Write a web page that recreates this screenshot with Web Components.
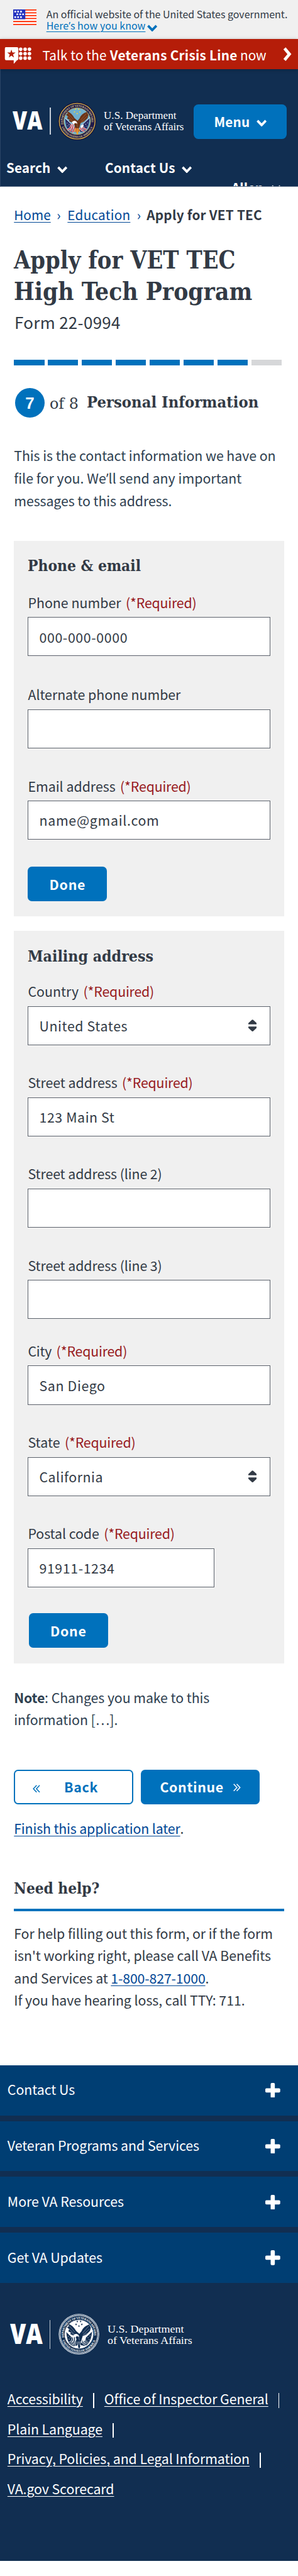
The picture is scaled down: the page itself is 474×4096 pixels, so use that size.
<!DOCTYPE html>
<html lang="en">
<head>
<meta charset="utf-8">
<title>Apply for VET TEC</title>
<style>
html{background:#fff;overflow:hidden}
body{margin:0;width:640px;height:5529px;overflow:hidden;zoom:.740625;font-family:"Noto Sans CJK SC","Open Sans",sans-serif;font-size:28.8px;line-height:48px;color:#323a45;background:#fff}
</style>
</head>
<body>
<vet-app></vet-app>
<script>
const fitted = [];
const define = (name, html) => customElements.define(name, class extends HTMLElement {
  constructor() {
    super();
    this.attachShadow({ mode: 'open' }).innerHTML = '<style>*{box-sizing:border-box}</style>' +
      (typeof html === 'function' ? html(this) : html);
  }
});

/* A single run of text set to a measured width (w); "squeeze" scales the glyphs, otherwise tracking is adjusted. */
customElements.define('text-run', class extends HTMLElement {
  constructor() {
    super();
    this.attachShadow({ mode: 'open' }).innerHTML = `<style>
      :host{display:block;flex:none;white-space:nowrap}
      :host([bold]){font-weight:700}
      :host([link]){color:var(--link,#004795)}
      span{display:inline-block;transform-origin:0 50%}
      :host([link]) span{text-decoration:underline;text-decoration-thickness:2px;text-underline-offset:4px}
      ::slotted(q){quotes:none;font-family:"Open Sans",sans-serif;line-height:1px}
    </style><span><slot></slot></span>`;
  }
  connectedCallback() { fitted.push(this); }
  fit(k) {
    const w = +this.getAttribute('w');
    if (!w) return;
    this.style.width = w + 'px';
    const s = this.shadowRoot.querySelector('span');
    const natural = s.getBoundingClientRect().width / k;
    if (this.hasAttribute('squeeze')) s.style.transform = `scaleX(${w / natural})`;
    else s.style.letterSpacing = (w - natural) / this.textContent.length + 'px';
  }
});

define('chevron-icon', `<style>:host{display:block;flex:none}svg{display:block}</style>
<svg width="22" height="15" viewBox="0 0 22 15"><path d="M2 2.5 11 12 20 2.5" fill="none" stroke="currentColor" stroke-width="5"/></svg>`);

const star = (x, y, r) => {
  let p = '';
  for (let i = 0; i < 10; i++) {
    const a = -Math.PI / 2 + i * Math.PI / 5, q = i % 2 ? r * .4 : r;
    p += `${(x + q * Math.cos(a)).toFixed(2)},${(y + q * Math.sin(a)).toFixed(2)} `;
  }
  return `<polygon points="${p}"/>`;
};

define('va-seal', el => {
  const mono = el.hasAttribute('mono');
  const id = mono ? 'm' : 'c';
  const c = mono
    ? { rim: '#dfe5ec', ring: '#112e51', sky: '#fff', txt: '#fff', star: '#112e51', wing: '#112e51', feather: '#8090a5', head: '#fff', flag: '#112e51', red: '#112e51', tail: '#112e51' }
    : { rim: '#d8b145', ring: '#1f1a4b', sky: '#70b0cf', txt: '#d9c48a', star: '#f0d23c', wing: '#6b3317', feather: '#a0623a', head: '#fff', flag: '#272c66', red: '#c0202f', tail: '#e9a52c' };
  return `<style>:host{display:block;flex:none}svg{display:block;width:100%;height:100%}</style>
<svg viewBox="-50 -50 100 100">
<defs><path id="t${id}" d="M-36.3 8A37.2 37.2 0 1 1 36.3 8"/><path id="b${id}" d="M-41 13A43 43 0 0 0 41 13"/></defs>
<circle r="49.5" fill="${mono ? '#dfe5ec' : '#17163f'}"/>
<circle r="${mono ? 48.3 : 46.5}" fill="${mono ? '#112e51' : 'none'}"/>
<circle r="46.2" fill="${c.ring}" stroke="${c.rim}" stroke-width="${mono ? 3.6 : 2.2}" ${mono ? 'stroke-dasharray="1.9 1"' : ''}/>
<circle r="34.6" fill="${c.sky}" stroke="${c.rim}" stroke-width="1.2"/>
<g fill="${c.txt}" font-family="Liberation Serif,serif" font-weight="700" font-size="7.4">
<text><textPath href="#t${id}" textLength="128">DEPARTMENT OF VETERANS AFFAIRS</textPath></text>
<text><textPath href="#b${id}" textLength="104" startOffset="2">UNITED STATES OF AMERICA</textPath></text></g>
<g fill="${c.star}">${star(-4, -31, 2.8)}${star(4, -31, 2.8)}${star(-7, -24, 2.8)}${star(7, -24, 2.8)}${star(0, -20, 2.8)}</g>
<path d="M-31-7-8 14-4 25Q-10 31-19 27-30 18-31-7ZM32-8 9 12 5 25Q12 31 20 26 31 15 32-8Z" fill="${c.flag}"/>
<path d="M-31-8-8 14M33-10 9 13" stroke="#fff" stroke-width="${mono ? 4 : 1.4}"/>
<g fill="#fff"><circle cx="-26" cy="5" r=".9"/><circle cx="-21" cy="8" r=".9"/><circle cx="-24" cy="12" r=".9"/><circle cx="-18" cy="13" r=".9"/><circle cx="27" cy="4" r=".9"/><circle cx="22" cy="8" r=".9"/><circle cx="25" cy="13" r=".9"/><circle cx="19" cy="15" r=".9"/></g>
<path d="M-16 8Q-13 17-25 22M-11 7Q-9 18-19 26M-6 14Q-7 23-13 29M12 14Q15 21 24 21M8 17Q10 24 19 26" fill="none" stroke="#fff" stroke-width="4.4"/>
<path d="M-16 8Q-13 17-25 22M-11 7Q-9 18-19 26M-6 14Q-7 23-13 29M12 14Q15 21 24 21M8 17Q10 24 19 26" fill="none" stroke="${c.red}" stroke-width="2.1"/>
<path d="M-25-25Q-14-21-7-8L1-1 6-7Q10-19 25-24L29-16 27-8 18 1 9 5 5 18-5 19-7 9-14 3-21 0-20-4-26-7-24-12-29-17-25-19Z" fill="${c.wing}"/>
<path d="M-24-21-10-5M-25-14-11 0M-20-5-9 4M24-20 9-3M26-13 10 1M20-3 8 5M-1 4 1 15" stroke="${c.feather}" stroke-width="1.3" fill="none"/>
<path d="M-14 3Q-9-4-2 1L1 6-6 5-9 9Z" fill="${c.head}"/>
<path d="M9 12 17 8 16 15 9 18Z" fill="${c.head}"/>
<path d="M-5 18-8 29-3 26-1 34 2 34 4 26 8 28 4 18Z" fill="${c.tail}"/><path d="M-2 18-3 29M2 18 3 28" stroke="${mono ? '#fff' : '#c0202f'}" stroke-width="1.3"/>
</svg>`;
});

define('va-logo', el => {
  const f = el.hasAttribute('footer');
  return `<style>
:host{display:flex;align-items:center;color:#fff}
.va{font:800 ${f ? 60 : 56}px/60px "Open Sans",sans-serif;margin:-5px 16px 0 ${f ? 21 : 27}px}
.bar{width:1.4px;height:${f ? 62 : 59}px;background:#c5ced8;margin-right:${f ? 17.5 : 16}px}
va-seal{width:${f ? 88 : 83}px;height:${f ? 88 : 83}px;margin-right:${f ? 17 : 15.5}px}
.dept{font:${f ? 23.5 : 22.4}px/${f ? 24.5 : 23.5}px "Liberation Serif",serif}
</style>
<text-run squeeze class="va" w="${f ? 70 : 64}">VA</text-run><div class="bar"></div><va-seal ${f ? 'mono' : ''}></va-seal>
<div class="dept"><text-run squeeze w="${f ? 164 : 156}">U.S. Department</text-run><text-run squeeze w="${f ? 182 : 172}">of Veterans Affairs</text-run></div>`;
});

define('gov-banner', `<style>
:host{display:flex;height:84px;background:#f0f0f0;padding:20px 0 0 29px;box-sizing:border-box;font-size:21.6px;line-height:23.5px;--link:#0071bc}
svg{display:block;margin-right:20.5px}.row{display:flex}chevron-icon{color:#0071bc;margin:9px 0 0 4px}
</style>
<svg width="50" height="34" viewBox="0 0 50 34"><path fill="#fff" d="M0 0h50v34H0z"/><path stroke="#ff2a00" stroke-width="2.4" d="M0 1.2h50M0 7.2h50M0 13.2h50M0 19.4h50M0 26h50M0 32.3h50"/><path fill="#2433c0" d="M0 0h26v21H0z"/><path stroke="#fff" stroke-width="3.6" stroke-dasharray="3.6 2.6" d="M2.5 4.5h16.5M7 10.5h16.5M2.5 16.5h16.5"/></svg>
<div style="margin-top:-.5px"><text-run w="518">An official website of the United States government.</text-run>
<div class="row"><text-run link w="213">Here<q>’</q>s how you know</text-run><chevron-icon></chevron-icon></div></div>`);

define('crisis-line', `<style>
:host{display:flex;align-items:center;height:64px;background:#b51d09;color:#fff;font-size:28px;position:relative;box-shadow:0 2px 8px rgba(0,0,0,.25)}
svg{display:block;flex:none}
</style>
<svg width="58" height="36" viewBox="0 0 58 36" style="margin-left:9px;margin-top:6px"><path fill="#fff" d="M3 0h24q3 0 3 3v22q0 3-3 3l-7 8v-8H4q-3 0-3-3V3q0-3 2-3z"/><g fill="#b51d09">${star(15, 14.5, 9.5)}</g><g fill="#fff">${[35, 44.5, 53.8].map(x => [4.5, 14, 23.5].map(y => `<circle cx="${x}" cy="${y}" r="3.8"/>`).join('')).join('')}</g></svg>
<text-run w="138" style="margin:6px 0 0 24px">Talk to the</text-run><text-run bold w="274" style="margin:6px 0 0 7px">Veterans Crisis Line</text-run><text-run w="56" style="margin:6px 0 0 6px">now</text-run>
<svg width="20" height="30" viewBox="0 0 20 30" style="margin-left:36px"><path fill="none" stroke="#fff" stroke-width="6.4" d="M3.500 2.500 14 15 3.500 27.500"/></svg>`);

define('site-header', `<style>
:host{display:block;height:253px;box-sizing:border-box;overflow:hidden;background:#112e51;color:#fff;border-bottom:1.4px solid #5a6c84;border-left:1.4px solid #2b4566;padding-top:71px;font-size:28px;font-weight:700}
div{display:flex;align-items:center}
.top{height:85px;align-items:flex-start}va-logo{height:82px;margin-left:-1px}
.menu{width:200px;height:75px;margin:5px 0 0 20.500px;border-radius:10px;background:#0071bc;padding-left:44px}
.nav{height:48px;margin-top:32px}.acct{height:48px;margin-top:-5px;padding-left:496px}
</style>
<div class="top"><va-logo></va-logo><div class="menu"><text-run w="77">Menu</text-run><chevron-icon style="margin-left:14px;margin-top:6px"></chevron-icon></div></div>
<div class="nav"><text-run w="95" style="margin-left:12px">Search</text-run><chevron-icon style="margin-left:15px;margin-top:8px"></chevron-icon><text-run w="151" style="margin-left:80px">Contact Us</text-run><chevron-icon style="margin-left:14px;margin-top:8px"></chevron-icon></div>
<div class="acct"><text-run w="68">Allen</text-run><chevron-icon style="margin-left:17px;margin-top:2px"></chevron-icon></div>`);

define('bread-crumbs', `<style>:host{display:flex;font-size:28px;color:#004795}text-run[bold]{color:#323a45}</style>
<text-run link w="79">Home</text-run><text-run w="9" style="margin-left:13px">›</text-run><text-run link w="135" style="margin-left:14px">Education</text-run><text-run w="9" style="margin-left:14px">›</text-run><text-run bold w="248" style="margin-left:12px">Apply for VET TEC</text-run>`);

define('form-title', `<style>
:host{display:block}
h1{margin:0;font:700 52px/67.7px "DejaVu Serif Condensed","DejaVu Serif",serif;font-stretch:condensed}
p{margin:5.500px 0 0;font-size:35px;line-height:48px}
</style><h1><text-run squeeze w="476">Apply for VET TEC</text-run><text-run squeeze w="512">High Tech Program</text-run></h1><p><text-run w="228" style="margin-left:1px">Form 22-0994</text-run></p>`);

define('form-progress', `<style>
:host{display:block}.bar{display:flex;gap:7.700px;height:12px}i{display:block;width:65.200px;background:#0071bc}i:last-child{background:#d6d7d9}
.step{display:flex;align-items:center;height:64px;margin-top:48px;font:33px/48px "DejaVu Serif",serif;font-stretch:condensed}
b{width:64px;height:64px;border-radius:50%;background:#0071bc;color:#fff;font:700 35px/66px "Liberation Sans",sans-serif;text-align:center;margin-left:2px}
</style><div class="bar">${'<i></i>'.repeat(8)}</div>
<div class="step"><b>7</b><text-run squeeze w="62" style="margin:3px 0 0 11px">of 8</text-run><text-run squeeze bold w="369" style="margin-left:18px">Personal Information</text-run></div>`);

define('form-card', `<style>:host{display:block;width:580px;background:#f0f0f0}h3{margin:0;font:700 32.500px/48px "DejaVu Serif",serif;font-stretch:condensed}</style><h3><slot name="title"></slot></h3><slot></slot>`);

/* A labelled text box or select: label/lw, value/vw, required, select. */
define('form-field', el => {
  const a = n => el.getAttribute(n);
  return `<style>
:host{display:block;width:520px;height:140px}
.label{display:flex;gap:10px;height:48px;margin-bottom:8px}.req{color:#981b1e}
.box{display:flex;align-items:center;justify-content:space-between;height:84px;border:2px solid #5b616b;background:#fff;padding:0 28px 0 23px}
</style>
<div class="label"><text-run w="${a('lw')}">${a('label')}</text-run>${el.hasAttribute('required') ? '<text-run class="req" w="152">(*Required)</text-run>' : ''}</div>
<div class="box"><text-run w="${a('vw') || ''}">${a('value') || ''}</text-run>${el.hasAttribute('select') ? '<svg width="18" height="26" viewBox="0 0 18 26"><path fill="#323a45" d="M7.500 1Q9-.5 10.500 1L17.500 7.500Q19 10.400 17 10.400H1Q-1 10.400.5 7.500ZM7.500 25Q9 26.500 10.500 25L17.500 18.500Q19 15.200 17 15.200H1Q-1 15.200.5 18.500Z"/></svg>' : ''}</div>`;
});

define('app-button', `<style>
:host{display:flex;align-items:center;justify-content:center;gap:20px;width:170px;height:74px;border-radius:9px;background:#0071bc;color:#fff;font-weight:700}
:host([outline]){background:#fff;color:#0071bc;border:4px solid #0071bc}
:host([wide]){width:256px;box-sizing:border-box}
</style><slot></slot>`);

define('double-angle', el => `<style>:host{display:block;flex:none}svg{display:block;${el.hasAttribute('left') ? 'transform:scaleX(-1)' : ''}}</style><svg width="16" height="17" viewBox="0 0 16 17"><path fill="none" stroke="currentColor" stroke-width="2" d="M1 1l7 7.500-7 7.500M7.500 1l7 7.500-7 7.500"/></svg>`);

define('site-footer', el => {
  const row = (t, w) => `<div class="row"><text-run w="${w}">${t}</text-run><svg width="32" height="32" viewBox="0 0 32 32"><rect y="11.500" width="32" height="9" rx="2.500" fill="#fff"/><rect x="11.500" width="9" height="32" rx="2.500" fill="#fff"/></svg></div>`;
  return `<style>
:host{display:block;height:1064px;background:#112e51;color:#fff;--link:#fff}
.rows{display:grid;gap:12px}.row{display:flex;align-items:center;justify-content:space-between;height:108px;background:#003e73;padding:0 38px 0 16px}.row text-run{margin-top:-4px}
va-logo{height:88px;margin:66px 0 62.400px}
.l{display:flex;height:64px;line-height:64px;padding-left:16px}i{width:2px;height:32px;background:#fff;margin:20px 22px 0}
</style><div class="rows">${row('Contact Us', 145)}${row('Veteran Programs and Services', 412)}${row('More VA Resources', 250)}${row('Get VA Updates', 204)}</div>
<va-logo footer></va-logo>
<div class="l"><text-run link w="162">Accessibility</text-run><i></i><text-run link w="352">Office of Inspector General</text-run><i></i></div>
<div class="l"><text-run link w="204">Plain Language</text-run><i></i></div>
<div class="l"><text-run link w="520">Privacy, Policies, and Legal Information</text-run><i></i></div>
<div class="l"><text-run link w="229">VA.gov Scorecard</text-run></div>`;
});

define('vet-app', `<style>
:host{display:block;width:640px;height:5529px;overflow:hidden}
main{padding:36.600px 30px 0}
.row{display:flex}.intro{color:#2e4050}
h2{margin:82px 0 0;font:700 33.500px/48px "DejaVu Serif",serif;font-stretch:condensed}
hr{border:0;height:5px;background:#0071bc;margin:19px 0 23px}
</style>
<gov-banner></gov-banner><crisis-line></crisis-line><site-header></site-header>
<main>
<bread-crumbs></bread-crumbs>
<form-title style="margin-top:40px"></form-title>
<form-progress style="margin-top:58px"></form-progress>
<div class="intro" style="margin:57.500px 0 63px"><text-run w="562">This is the contact information we have on</text-run><text-run w="489">file for you. We<q>’</q>ll send any important</text-run><text-run w="339">messages to this address.</text-run></div>

<form-card style="height:806px;padding:30px;box-sizing:border-box">
<text-run squeeze slot="title" w="243">Phone &amp; email</text-run>
<form-field style="margin-top:30px" label="Phone number" lw="200" required value="000-000-0000" vw="190"></form-field>
<form-field style="margin-top:58px" label="Alternate phone number" lw="328"></form-field>
<form-field style="margin-top:56px" label="Email address" lw="188" required value="name@gmail.com" vw="258"></form-field>
<app-button style="margin-top:58px"><text-run w="78">Done</text-run></app-button>
</form-card>

<form-card style="height:1574px;margin-top:31px;padding:32px 30px 0;box-sizing:border-box">
<text-run squeeze slot="title" w="270">Mailing address</text-run>
<form-field style="margin-top:26px" label="Country" lw="109" required value="United States" vw="190" select></form-field>
<form-field style="margin-top:56px" label="Street address" lw="192" required value="123 Main St" vw="162"></form-field>
<form-field style="margin-top:56px" label="Street address (line 2)" lw="288"></form-field>
<form-field style="margin-top:56px" label="Street address (line 3)" lw="288"></form-field>
<form-field style="margin-top:44px" label="City" lw="51" required value="San Diego" vw="142"></form-field>
<form-field style="margin-top:56px" label="State" lw="69" required value="California" vw="137" select></form-field>
<form-field style="margin-top:56px;width:400px" label="Postal code" lw="153" required value="91911-1234" vw="162"></form-field>
<app-button style="margin:56px 0 0 2px"><text-run w="78">Done</text-run></app-button>
</form-card>

<div class="intro" style="margin:47.500px 0 84px"><div class="row"><text-run bold w="66">Note</text-run><text-run w="354">: Changes you make to this</text-run></div><text-run w="223">information […].</text-run></div>
<div class="row" style="gap:16px">
<app-button wide outline style="justify-content:flex-start;gap:52px;padding-left:37px"><double-angle left style="margin-top:7px"></double-angle><text-run w="73">Back</text-run></app-button>
<app-button wide style="gap:20px"><text-run w="137">Continue</text-run><double-angle style="margin-top:4px"></double-angle></app-button></div>
<div class="row" style="margin-top:27.400px"><text-run link w="357">Finish this application later</text-run><text-run w="9">.</text-run></div>
<h2><text-run squeeze w="184">Need help?</text-run></h2><hr>
<text-run w="556">For help filling out this form, or if the form</text-run>
<text-run w="552">isn't working right, please call VA Benefits</text-run>
<div class="row"><text-run w="202">and Services at</text-run><text-run link w="203" style="margin-left:6px">1-800-827-1000</text-run><text-run w="9">.</text-run></div>
<text-run w="496">If you have hearing loss, call TTY: 711.</text-run>
</main>
<site-footer style="margin-top:116px"></site-footer>`);

const k = document.body.getBoundingClientRect().width / 640;
fitted.forEach(t => t.fit(k));
</script>
</body>
</html>
